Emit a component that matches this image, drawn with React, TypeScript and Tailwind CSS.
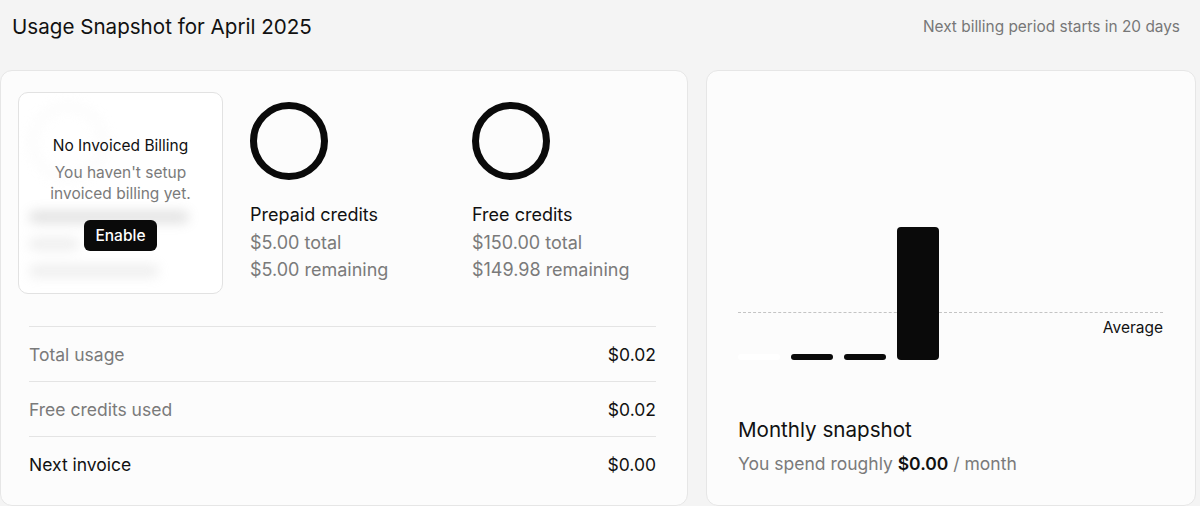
import React from "react";

const Ring = ({ faint = false }: { faint?: boolean }) => (
  <div
    className={
      faint
        ? "w-[78px] h-[78px] rounded-full border-[7px] border-[#ededed]"
        : "w-[78px] h-[78px] rounded-full border-[7px] border-[#0a0a0a]"
    }
  />
);

const CreditColumn = ({ title, total, remaining }: { title: string; total: string; remaining: string }) => (
  <div className="w-[222px] shrink-0 pt-[10px]">
    <Ring />
    <div className="mt-[21px] text-[18px] leading-[28px] text-[#111]">{title}</div>
    <div className="text-[18px] leading-[27px] text-[#7a7a7a]">{total}</div>
    <div className="text-[18px] leading-[27px] text-[#7a7a7a]">{remaining}</div>
  </div>
);

const SummaryRow = ({ label, value, strong = false }: { label: string; value: string; strong?: boolean }) => (
  <div className="flex items-center justify-between h-[55px] pt-[2px] border-t border-[#e4e4e4]">
    <span className={strong ? "text-[17.5px] text-[#111]" : "text-[17.5px] text-[#7a7a7a]"}>{label}</span>
    <span className="text-[17.5px] text-[#111]">{value}</span>
  </div>
);

export default function App() {
  const bars = [
    { h: 6, color: "bg-white" },
    { h: 6, color: "bg-[#0a0a0a]" },
    { h: 6, color: "bg-[#0a0a0a]" },
    { h: 133, color: "bg-[#0a0a0a]" },
  ];

  return (
    <div className="w-[1200px] h-[506px] overflow-hidden bg-[#f4f4f4] font-['Inter',sans-serif]">
      {/* header */}
      <div className="flex items-center justify-between h-[70px] pl-[12px] pr-[20px] pb-[16px]">
        <h1 className="text-[20.6px] text-[#111]">Usage Snapshot for April 2025</h1>
        <span className="text-[15.4px] text-[#777]">Next billing period starts in 20 days</span>
      </div>

      <div className="flex gap-[18px] pr-[4px]">
        {/* usage card */}
        <div className="w-[688px] h-[436px] bg-[#fcfcfc] border border-[#e6e6e6] rounded-[12px] pt-[21px] pl-[17px] pr-[31px]">
          <div className="flex">
            <div className="relative w-[205px] h-[202px] shrink-0 rounded-[10px] border border-[#e2e2e2] bg-white overflow-hidden">
              <div className="pl-[10px] pt-[10px] blur-[6px] opacity-25">
                <Ring faint />
                <div className="mt-[30px] h-[12px] w-[160px] rounded-full bg-[#888]" />
                <div className="mt-[15px] h-[12px] w-[50px] rounded-full bg-[#bbb]" />
                <div className="mt-[15px] h-[12px] w-[130px] rounded-full bg-[#bbb]" />
              </div>
              <div className="absolute inset-0 flex flex-col items-center pt-[43px]">
                <div className="text-[15.5px] leading-[20px] text-[#111]">No Invoiced Billing</div>
                <div className="mt-[6px] text-[15.5px] leading-[21px] text-[#7a7a7a] text-center">
                  You haven't setup
                  <br />
                  invoiced billing yet.
                </div>
                <button className="mt-[16px] h-[31px] px-[11px] rounded-[6px] bg-[#0a0a0a] text-white text-[15.5px] font-medium">
                  Enable
                </button>
              </div>
            </div>
            <div className="w-[27px] shrink-0" />
            <CreditColumn title="Prepaid credits" total="$5.00 total" remaining="$5.00 remaining" />
            <CreditColumn title="Free credits" total="$150.00 total" remaining="$149.98 remaining" />
          </div>

          <div className="mt-[32px] ml-[11px]">
            <SummaryRow label="Total usage" value="$0.02" />
            <SummaryRow label="Free credits used" value="$0.02" />
            <SummaryRow label="Next invoice" value="$0.00" strong />
          </div>
        </div>

        {/* monthly card */}
        <div className="flex-1 h-[436px] bg-[#fcfcfc] border border-[#e6e6e6] rounded-[12px] pl-[31px] pr-[32px] pt-[155px]">
          <div className="relative h-[134px]">
            <div className="absolute left-0 right-0 bottom-[47px] border-t border-dashed border-[#c4c4c4]" />
            <span className="absolute right-0 top-[92px] text-[15.5px] leading-[20px] text-[#111]">Average</span>
            <div className="relative flex items-end gap-[11px] h-full">
              {bars.map((b, i) => (
                <div key={i} className={`w-[42px] rounded-[4px] ${b.color}`} style={{ height: b.h }} />
              ))}
            </div>
          </div>
          <div className="mt-[56px] text-[20.6px] leading-[28px] text-[#111]">Monthly snapshot</div>
          <div className="mt-[8px] text-[17.5px] leading-[24px] text-[#7a7a7a]">
            You spend roughly <span className="font-semibold text-[#111]">$0.00</span> / month
          </div>
        </div>
      </div>
    </div>
  );
}
